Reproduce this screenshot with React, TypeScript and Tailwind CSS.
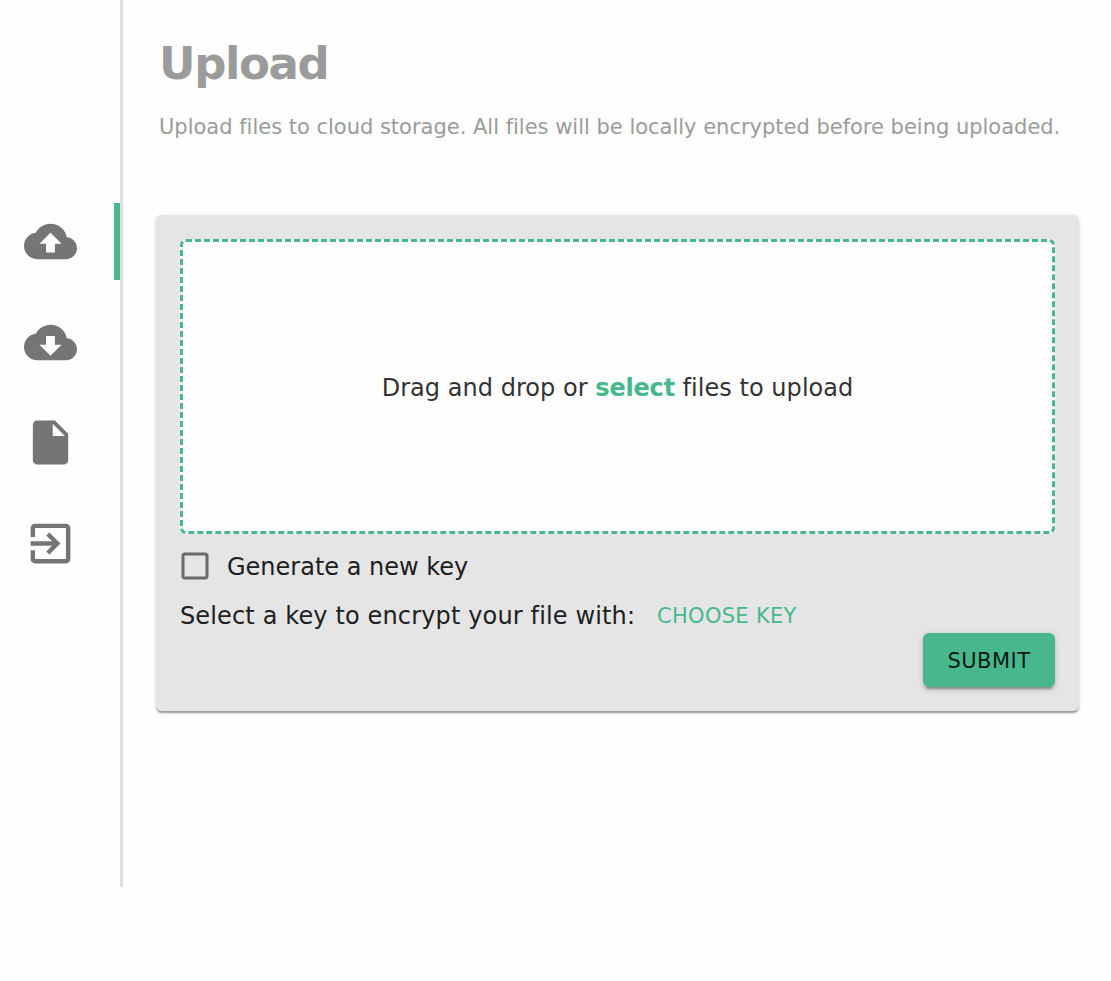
import { MdCheckBoxOutlineBlank, MdCloudDownload, MdCloudUpload, MdExitToApp, MdInsertDriveFile } from "react-icons/md";

const navItems = [
  { label: "Upload", Icon: MdCloudUpload, active: true },
  { label: "Download", Icon: MdCloudDownload, active: false },
  { label: "Keys", Icon: MdInsertDriveFile, active: false },
  { label: "Log out", Icon: MdExitToApp, active: false },
];

function Sidebar() {
  return (
    <nav className="flex h-[887px] w-[123px] shrink-0 flex-col gap-[23.6px] border-r-[3px] border-[#dfdfdf] pt-[203px]">
      {navItems.map(({ label, Icon, active }) => (
        <button
          key={label}
          aria-label={label}
          className={
            active
              ? "flex h-[77px] w-[120px] shrink-0 items-center border-r-[6px] border-[#48b88c] pl-6 text-[#757575]"
              : "flex h-[77px] w-[120px] shrink-0 items-center pl-6 text-[#757575]"
          }
        >
          <Icon className="size-[53px]" />
        </button>
      ))}
    </nav>
  );
}

export default function App() {
  return (
    <div className="flex h-[981px] w-[1111px] overflow-hidden bg-[#fefefe] font-['DejaVu_Sans',sans-serif] whitespace-nowrap [font-variant-ligatures:none]">
      <Sidebar />
      <main className="flex flex-col pl-[33px]">
        <h1 className="mt-[36px] ml-[3px] h-14 text-[45px] leading-[56px] font-bold tracking-[-1.4px] text-[#9b9b9b]">Upload</h1>
        <p className="mt-[19px] ml-[3px] h-8 text-[21px] leading-8 tracking-[-0.01px] text-[#9b9b9b]">
          Upload files to cloud storage. All files will be locally encrypted before being uploaded.
        </p>
        <section className="mt-[72px] flex h-[496px] w-[923px] flex-col rounded-md bg-[#e5e5e5] px-6 pt-6 text-2xl text-[#202020] shadow-[0_3px_1.5px_-1.5px_rgba(0,0,0,0.2),0_1.5px_1.5px_rgba(0,0,0,0.14),0_1.5px_4.5px_rgba(0,0,0,0.12)]">
          <div className="flex h-[295px] w-[875px] items-center justify-center rounded-md border-[3px] border-dashed border-[#48b88c] bg-[#fefefe] pt-[2px] text-[#333333]">
            <p className="tracking-[0.04px]">
              Drag and drop or <b className="tracking-[-0.2px] text-[#48b88c]">select</b> files to upload
            </p>
          </div>
          <label className="mt-[14px] flex h-9 items-center">
            <MdCheckBoxOutlineBlank className="-ml-[3px] size-9 text-[#6b6b6b]" />
            <span className="ml-[14px] pt-[2px]">Generate a new key</span>
          </label>
          <div className="mt-[13px] flex h-9 items-center pt-[2px]">
            <span className="w-[455px] tracking-[0.14px]">Select a key to encrypt your file with:</span>
            <button className="ml-[22px] text-[21px] tracking-[0.3px] text-[#48b88c]">CHOOSE KEY</button>
          </div>
          <button className="h-[54px] w-[132px] shrink-0 self-end rounded-md bg-[#48b88c] pt-[2px] text-[21px] tracking-[0.5px] text-[#0a1a14] shadow-[0_4.5px_1.5px_-3px_rgba(0,0,0,0.2),0_3px_3px_rgba(0,0,0,0.14),0_1.5px_7.5px_rgba(0,0,0,0.12)]">
            SUBMIT
          </button>
        </section>
      </main>
    </div>
  );
}
